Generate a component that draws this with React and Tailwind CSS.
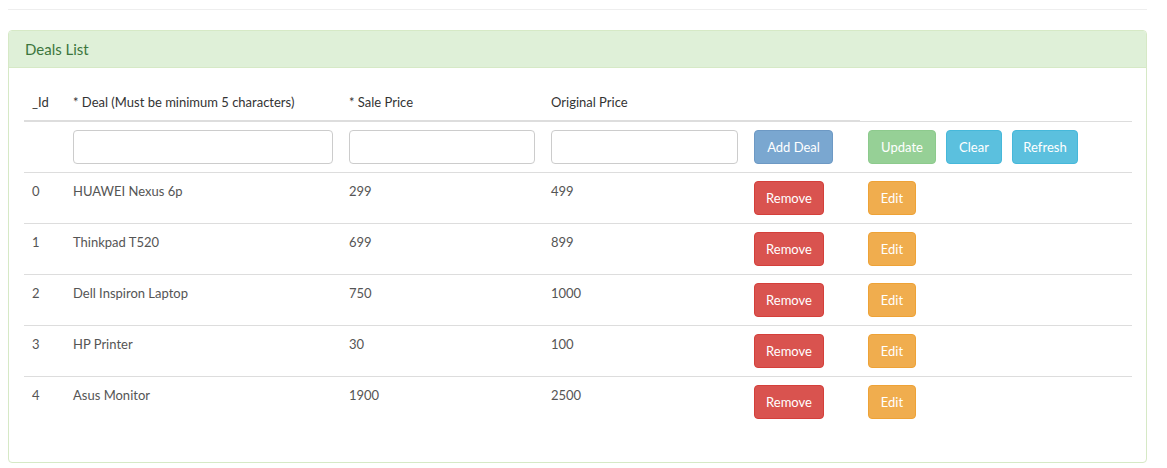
import React from "react";

const deals = [
  { id: 0, name: "HUAWEI Nexus 6p", sale: "299", orig: "499" },
  { id: 1, name: "Thinkpad T520", sale: "699", orig: "899" },
  { id: 2, name: "Dell Inspiron Laptop", sale: "750", orig: "1000" },
  { id: 3, name: "HP Printer", sale: "30", orig: "100" },
  { id: 4, name: "Asus Monitor", sale: "1900", orig: "2500" },
];

const btn =
  "h-[34px] inline-flex items-center justify-center rounded-[4px] border text-white text-[13px] leading-5";

export default function App() {
  return (
    <div
      className="w-[1167px] h-[468px] bg-white pl-2 pr-5 text-[#333]"
      style={{ fontFamily: "Lato, 'Open Sans', sans-serif" }}
    >
      <div className="mt-[9px] mb-5 border-t border-[#eee]" />
      <div className="rounded-[4px] border border-[#d6e9c6] bg-white">
        <div className="h-[37px] bg-[#dff0d8] border-b border-[#d6e9c6] rounded-t-[3px] px-4 flex items-center text-[15px] text-[#3c763d]">
          Deals List
        </div>
        <div className="p-[15px]">
          <table className="w-[1108px] border-collapse mb-5 table-fixed text-[13px]">
            <colgroup>
              <col className="w-[41px]" />
              <col className="w-[276px]" />
              <col className="w-[202px]" />
              <col className="w-[203px]" />
              <col className="w-[114px]" />
              <col />
            </colgroup>
            <thead>
              <tr>
                <th className="text-left font-normal px-2 pt-[9px] pb-2 leading-5 border-b-2 border-[#ddd] text-[#333]">_Id</th>
                <th className="text-left font-normal px-2 pt-[9px] pb-2 leading-5 border-b-2 border-[#ddd] text-[#333]">* Deal (Must be minimum 5 characters)</th>
                <th className="text-left font-normal px-2 pt-[9px] pb-2 leading-5 border-b-2 border-[#ddd] text-[#333]">* Sale Price</th>
                <th className="text-left font-normal px-2 pt-[9px] pb-2 leading-5 border-b-2 border-[#ddd] text-[#333]">Original Price</th>
                <th className="text-left font-normal px-2 pt-[9px] pb-2 leading-5 border-b-2 border-[#ddd]"></th>
              </tr>
            </thead>
            <tbody>
              <tr className="border-t border-[#ddd]">
                <td className="px-2 py-2"></td>
                <td className="px-2 py-2">
                  <input className="block w-full h-[34px] rounded-[4px] border border-[#ccc] px-3 outline-none" />
                </td>
                <td className="px-2 py-2">
                  <input className="block w-full h-[34px] rounded-[4px] border border-[#ccc] px-3 outline-none" />
                </td>
                <td className="px-2 py-2">
                  <input className="block w-full h-[34px] rounded-[4px] border border-[#ccc] px-3 outline-none" />
                </td>
                <td className="px-2 py-2">
                  <button className={`${btn} w-[79px] bg-[#7aa7d0] border-[#6d99c4]`}>Add Deal</button>
                </td>
                <td className="px-2 py-2">
                  <div className="flex gap-[10px]">
                    <button className={`${btn} w-[68px] bg-[#96d096] border-[#8dca8d]`}>Update</button>
                    <button className={`${btn} w-[56px] bg-[#5bc0de] border-[#46b8da]`}>Clear</button>
                    <button className={`${btn} w-[66px] bg-[#5bc0de] border-[#46b8da]`}>Refresh</button>
                  </div>
                </td>
              </tr>
              {deals.map((d) => (
                <tr key={d.id} className="border-t border-[#ddd] text-[#555]">
                  <td className="px-2 py-2 align-top leading-5">{d.id}</td>
                  <td className="px-2 py-2 align-top leading-5">{d.name}</td>
                  <td className="px-2 py-2 align-top leading-5">{d.sale}</td>
                  <td className="px-2 py-2 align-top leading-5">{d.orig}</td>
                  <td className="px-2 py-2 align-top">
                    <button className={`${btn} w-[70px] bg-[#d9534f] border-[#d43f3a]`}>Remove</button>
                  </td>
                  <td className="px-2 py-2 align-top">
                    <button className={`${btn} w-[48px] bg-[#f0ad4e] border-[#eea236]`}>Edit</button>
                  </td>
                </tr>
              ))}
            </tbody>
          </table>
        </div>
      </div>
    </div>
  );
}
